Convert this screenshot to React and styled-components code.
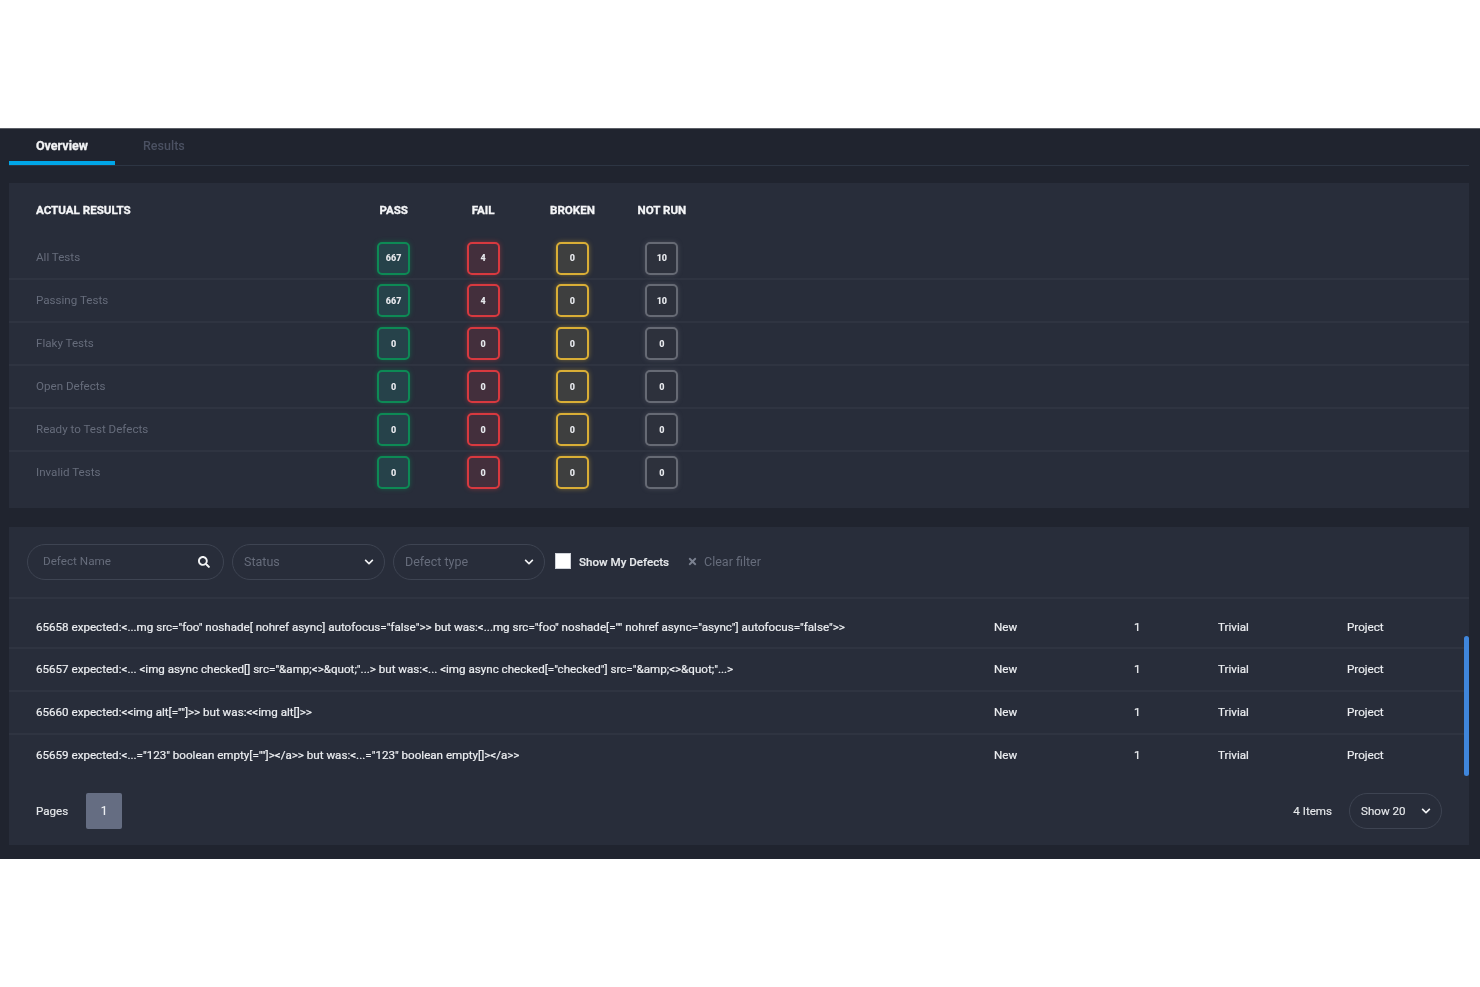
import React from "react";
import styled, { createGlobalStyle } from "styled-components";
import { FaSearch, FaChevronDown, FaTimes } from "react-icons/fa";

const Global = createGlobalStyle`
  html, body { margin: 0; padding: 0; background: #fff; }
  body { font-family: Roboto, "Liberation Sans", sans-serif; }
`;
const Page = styled.div`
  margin-top: 128px;
  height: 731px;
  box-sizing: border-box;
  border-top: 1px solid #5b5e66;
  background: #20242f;
  padding: 0 11px 0 9px;
  display: flex;
  flex-direction: column;
  filter: blur(0.35px);
`;
const Tabs = styled.div`
  height: 36px;
  display: flex;
  border-bottom: 1px solid #2d3543;
  box-sizing: content-box;
`;
const Tab = styled.div`
  width: ${p => p.$active ? "106px" : "auto"};
  box-sizing: border-box;
  height: 36px;
  padding-left: ${p => p.$active ? 27 : 28}px;
  padding-top: 9px;
  font-size: 12.5px;
  line-height: 15px;
  font-weight: ${p => p.$active ? 700 : 500};
  -webkit-text-stroke: ${p => p.$active ? "0.3px" : "0"} currentColor;
  color: ${p => p.$active ? "#f2f3f5" : "#4b5162"};
  border-bottom: ${p => p.$active ? "4px solid #00a6e8" : "none"};
`;
const Card = styled.section`
  background: #282d3a;
  margin-top: ${p => p.$mt}px;
  height: ${p => p.$h}px;
  display: flex;
  flex-direction: column;
  position: relative;
`;
const HeaderRow = styled.div`
  display: grid;
  grid-template-columns: 313px repeat(4, 89.4px);
  padding: 20px 0 0 27px;
  height: 35px;
  font-size: 11.6px;
  line-height: 14px;
  font-weight: 700;
  -webkit-text-stroke: 0.3px currentColor;
  color: #f4f5f7;
`;
const HeadCell = styled.div`
  text-align: ${p => p.$left ? "left" : "center"};
`;
const ResultRow = styled.div`
  display: grid;
  grid-template-columns: 313px repeat(4, 89.4px);
  align-items: center;
  padding-left: 27px;
  height: ${p => p.$h}px;
  box-sizing: border-box;
  border-bottom: ${p => p.$last ? "none" : "2px solid #2f3441"};
`;
const RowLabel = styled.div`
  font-size: 11.6px;
  padding-bottom: 2px;
  color: #666c7b;
`;
const BadgeCell = styled.div`
  display: flex;
  justify-content: center;
`;
const Badge = styled.div`
  width: 33px;
  height: 33px;
  box-sizing: border-box;
  border: 2px solid ${p => p.$c};
  border-radius: 5px;
  background: ${p => p.$bg};
  box-shadow: 0 0 5px ${p => p.$c}77;
  color: #e6e8ec;
  font-size: 9px;
  font-weight: 900;
  display: flex;
  align-items: center;
  justify-content: center;
`;
const FilterBar = styled.div`
  height: 72px;
  box-sizing: border-box;
  padding: 17px 0 0 18px;
  border-bottom: 2px solid #2f3441;
  display: flex;
  align-items: flex-start;
  flex-shrink: 0;
`;
const Pill = styled.div`
  width: ${p => p.$w}px;
  height: 36px;
  margin-right: ${p => p.$mr}px;
  box-sizing: border-box;
  border: 1px solid #3e4452;
  border-radius: 18px;
  padding: ${p => p.$pad};
  display: flex;
  align-items: center;
  justify-content: space-between;
  font-size: ${p => p.$fs || 12.5}px;
  line-height: 33px;
  color: #666c7b;
`;
const PillText = styled.span`
  position: relative;
  top: -1px;
`;
const PillIcon = styled.span`
  display: flex;
  color: ${p => p.$c || "#f2f3f5"};
  font-size: ${p => p.$s}px;
`;
const Check = styled.div`
  width: 16px;
  height: 16px;
  margin: 9px 8px 0 1px;
  background: #fff;
  border: 1px solid #cfd2d8;
  box-sizing: border-box;
`;
const CheckLabel = styled.div`
  font-size: 11.6px;
  line-height: 36px;
  font-weight: 500;
  -webkit-text-stroke: 0.15px currentColor;
  color: #e6e8eb;
  margin-right: 18px;
`;
const Clear = styled.div`
  display: flex;
  align-items: center;
  height: 34px;
  gap: 6px;
  font-size: 12.5px;
  color: #666c7b;
`;
const List = styled.div`
  padding-top: 7px;
  display: flex;
  flex-direction: column;
`;
const DefectRow = styled.div`
  display: grid;
  grid-template-columns: 958px 140px 84px 129px 1fr;
  align-items: center;
  padding-left: 27px;
  padding-bottom: ${p => p.$first ? 0 : 1}px;
  height: ${p => p.$h}px;
  box-sizing: border-box;
  border-bottom: ${p => p.$last ? "none" : "2px solid #2f3441"};
  font-size: 11.62px;
  -webkit-text-stroke: 0.2px currentColor;
  color: #eceef1;
  white-space: nowrap;
`;
const Scroll = styled.div`
  position: absolute;
  right: 0;
  top: 109px;
  width: 5px;
  height: 140px;
  border-radius: 3px;
  background: #3f86dc;
`;
const Footer = styled.div`
  display: flex;
  align-items: center;
  justify-content: space-between;
  padding: 17px 27px 0 27px;
  font-size: 11.6px;
  -webkit-text-stroke: 0.15px currentColor;
  color: #e6e8eb;
`;
const Group = styled.div`
  display: flex;
  align-items: center;
`;
const PageBtn = styled.div`
  width: 36px;
  height: 36px;
  margin-left: 18px;
  border-radius: 2px;
  background: #656d82;
  color: #eceef1;
  display: flex;
  align-items: center;
  justify-content: center;
  font-size: 12px;
`;
const ShowPill = styled(Pill)`
  margin: 0 0 0 17px;
  color: #e6e8eb;
  font-size: 11.6px;
`;

const tones = {
  pass: { c: "#0d8a55", bg: "#26424a" },
  fail: { c: "#d8393f", bg: "#432f3c" },
  broken: { c: "#d9ae36", bg: "#3e3f3f" },
  none: { c: "#666a74", bg: "#2d313c" },
};
const keys = ["pass", "fail", "broken", "none"];
const results = [
  ["All Tests", ["667", "4", "0", "10"], 42],
  ["Passing Tests", ["667", "4", "0", "10"], 43],
  ["Flaky Tests", ["0", "0", "0", "0"], 43],
  ["Open Defects", ["0", "0", "0", "0"], 43],
  ["Ready to Test Defects", ["0", "0", "0", "0"], 43],
  ["Invalid Tests", ["0", "0", "0", "0"], 41],
];
const defects = [
  [`65658 expected:<...mg src="foo" noshade[ nohref async] autofocus="false">> but was:<...mg src="foo" noshade[="" nohref async="async"] autofocus="false">>`, 43],
  [`65657 expected:<... <img async checked[] src="&amp;<>&quot;"...> but was:<... <img async checked[="checked"] src="&amp;<>&quot;"...>`, 43],
  [`65660 expected:<<img alt[=""]>> but was:<<img alt[]>>`, 43],
  [`65659 expected:<...="123" boolean empty[=""]></a>> but was:<...="123" boolean empty[]></a>>`, 41],
];

export default function App() {
  return (
    <>
      <Global />
      <Page>
        <Tabs>
          <Tab $active>Overview</Tab>
          <Tab>Results</Tab>
        </Tabs>
        <Card $mt={17} $h={325}>
          <HeaderRow>
            <HeadCell $left>ACTUAL RESULTS</HeadCell>
            <HeadCell>PASS</HeadCell>
            <HeadCell>FAIL</HeadCell>
            <HeadCell>BROKEN</HeadCell>
            <HeadCell>NOT RUN</HeadCell>
          </HeaderRow>
          {results.map(([label, vals, h], i) => (
            <ResultRow key={label} $h={h} $last={i === 5}>
              <RowLabel>{label}</RowLabel>
              {vals.map((v, j) => (
                <BadgeCell key={j}>
                  <Badge $c={tones[keys[j]].c} $bg={tones[keys[j]].bg}>{v}</Badge>
                </BadgeCell>
              ))}
            </ResultRow>
          ))}
        </Card>
        <Card $mt={19} $h={318}>
          <FilterBar>
            <Pill $w={197} $mr={8} $pad="0 13px 0 15px" $fs={11.7}>
              <PillText>Defect Name</PillText>
              <PillIcon $s={12}><FaSearch /></PillIcon>
            </Pill>
            <Pill $w={153} $mr={8} $pad="0 10px 0 11px">
              <PillText>Status</PillText>
              <PillIcon $s={10}><FaChevronDown /></PillIcon>
            </Pill>
            <Pill $w={152} $mr={9} $pad="0 10px 0 11px">
              <PillText>Defect type</PillText>
              <PillIcon $s={10}><FaChevronDown /></PillIcon>
            </Pill>
            <Check />
            <CheckLabel>Show My Defects</CheckLabel>
            <Clear>
              <PillIcon $s={11} $c="#7b8190"><FaTimes /></PillIcon>
              Clear filter
            </Clear>
          </FilterBar>
          <List>
            {defects.map(([text, h], i) => (
              <DefectRow key={i} $h={h} $first={i === 0} $last={i === 3}>
                <span>{text}</span>
                <span>New</span>
                <span>1</span>
                <span>Trivial</span>
                <span>Project</span>
              </DefectRow>
            ))}
          </List>
          <Scroll />
          <Footer>
            <Group>
              Pages
              <PageBtn>1</PageBtn>
            </Group>
            <Group>
              4 Items
              <ShowPill $w={93} $pad="0 10px 0 11px">
                Show 20
                <PillIcon $s={10}><FaChevronDown /></PillIcon>
              </ShowPill>
            </Group>
          </Footer>
        </Card>
      </Page>
    </>
  );
}
